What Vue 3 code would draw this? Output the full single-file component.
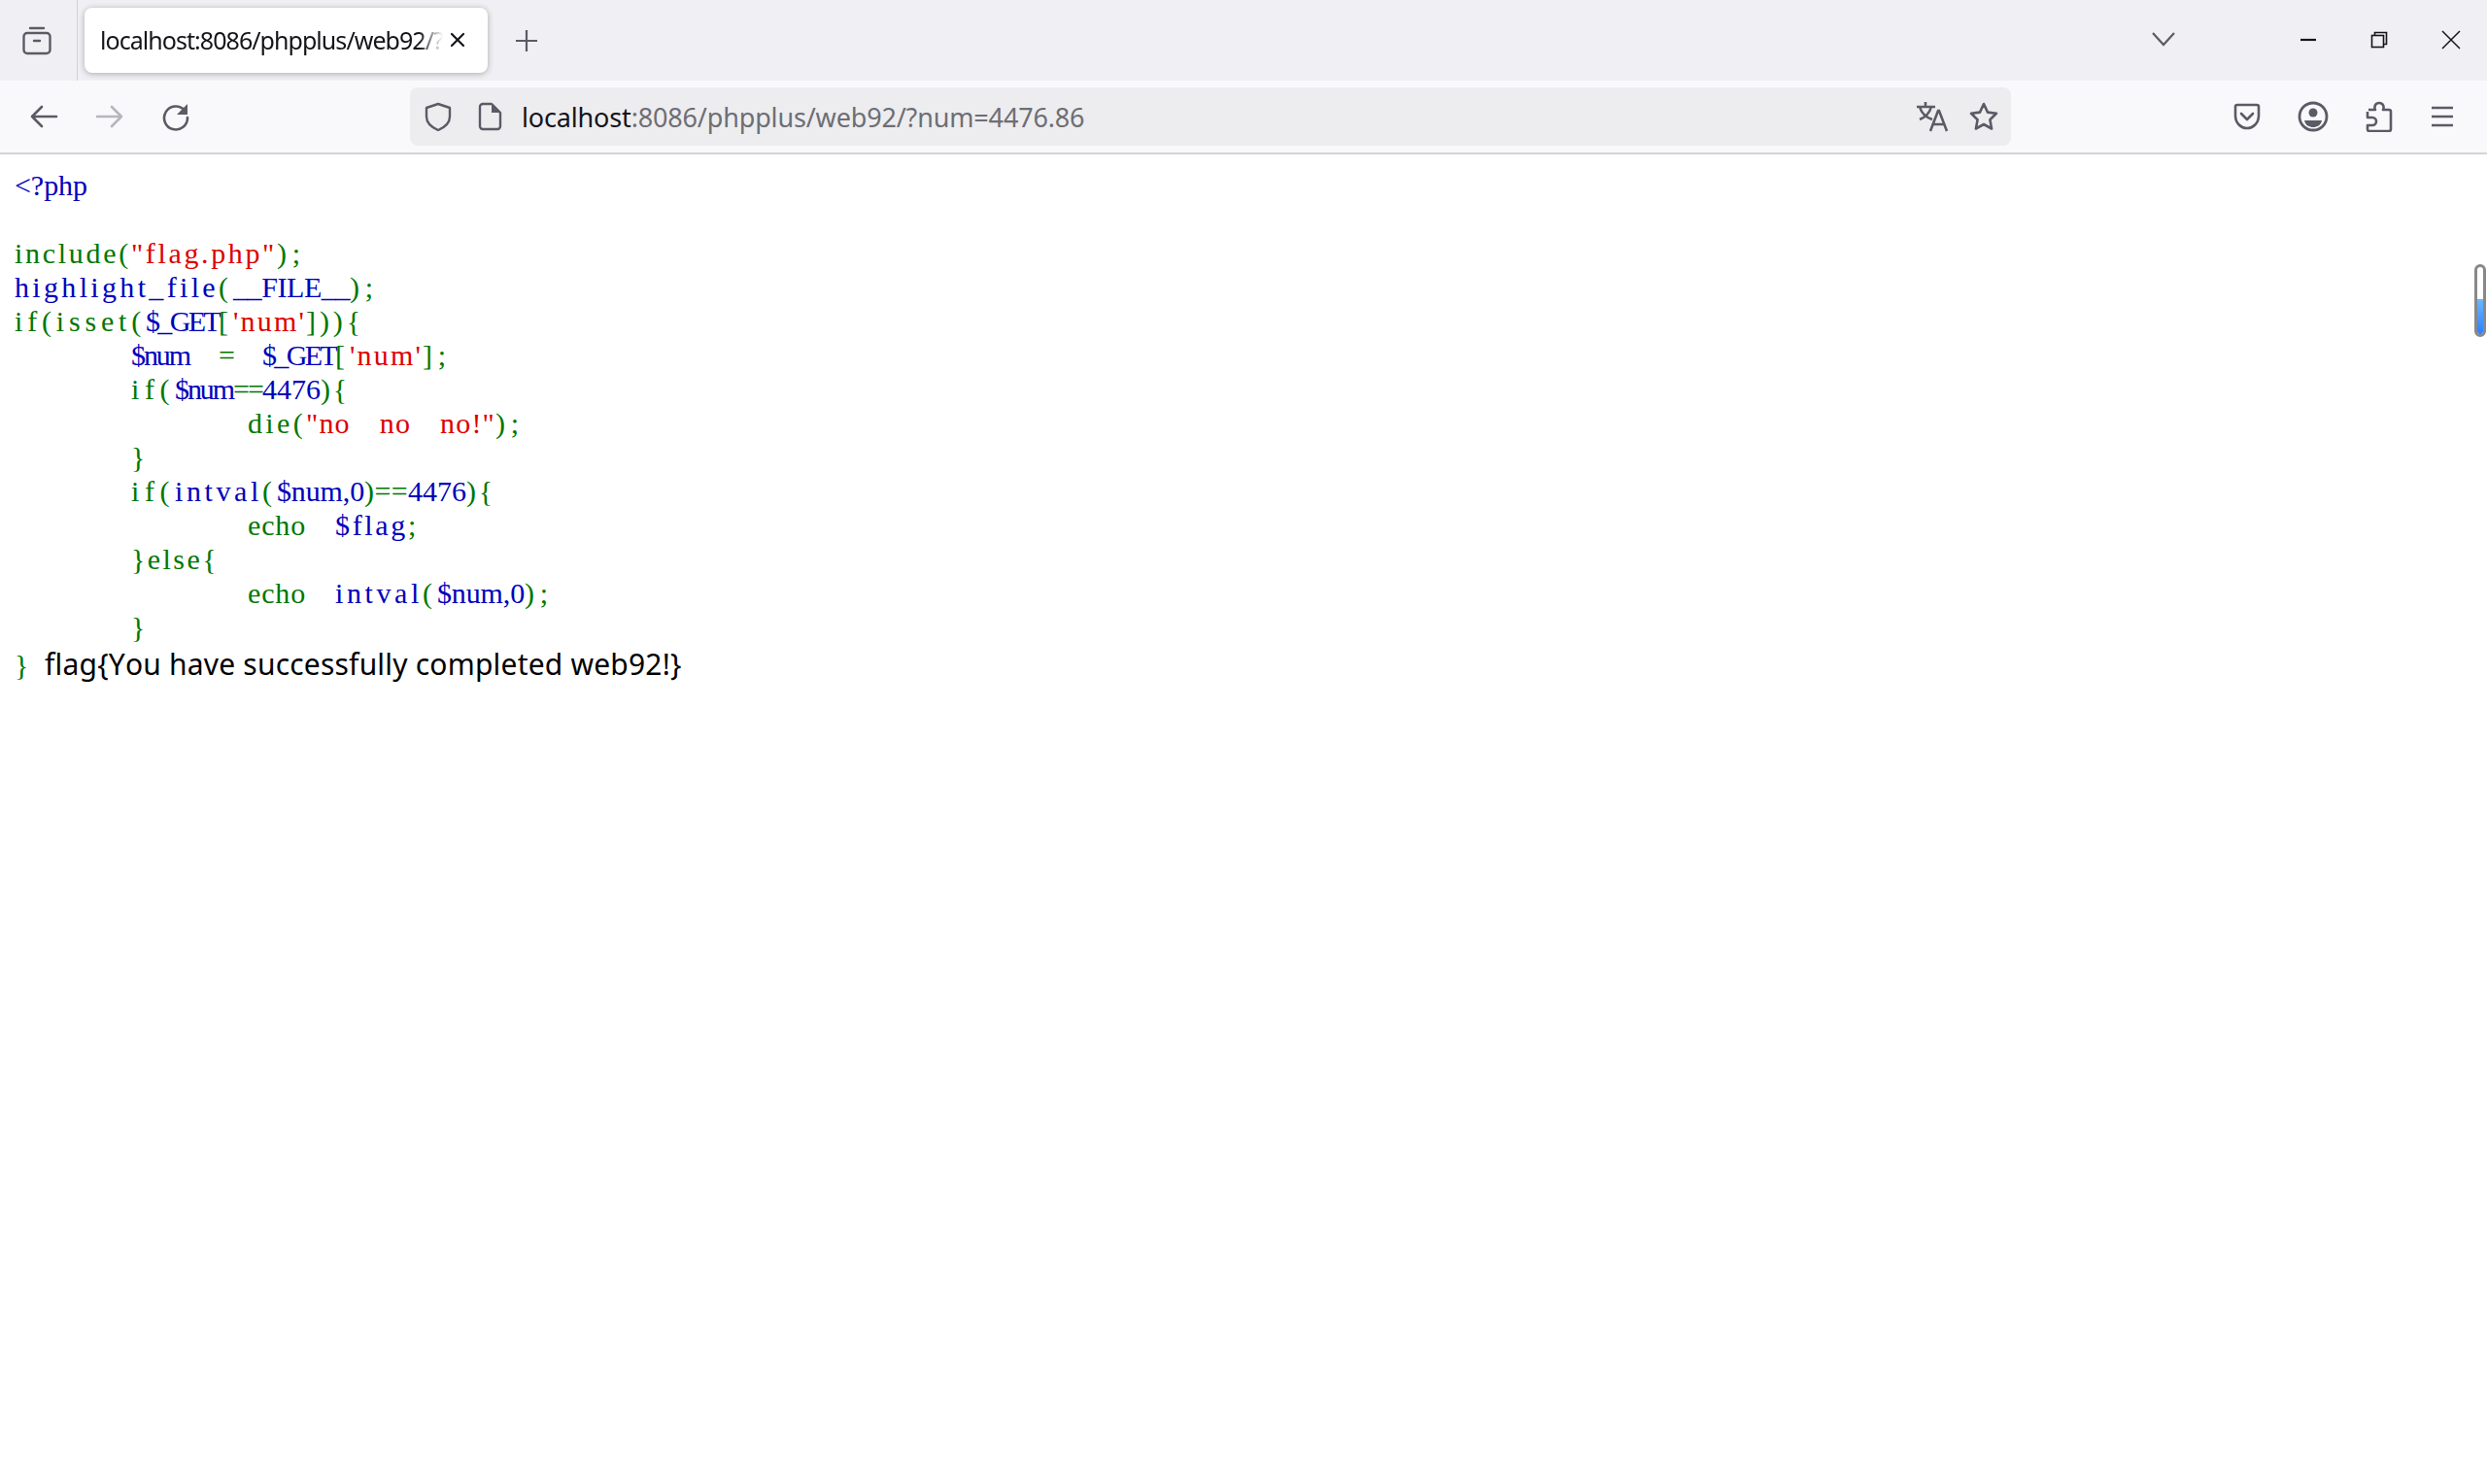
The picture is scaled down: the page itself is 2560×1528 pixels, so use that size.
<script setup>
const lines = [
  [['b', '<?php']],
  [],
  [['g', 'include('], ['r', '"flag.php"'], ['g', ');']],
  [['b', 'highlight_file'], ['g', '('], ['b', '__FILE__'], ['g', ');']],
  [['g', 'if(isset('], ['b', '$_GET'], ['g', '['], ['r', "'num'"], ['g', '])){']],
  [['b', '        $num'], ['g', '  =  '], ['b', '$_GET'], ['g', '['], ['r', "'num'"], ['g', '];']],
  [['g', '        if('], ['b', '$num'], ['g', '=='], ['b', '4476'], ['g', '){']],
  [['g', '                die('], ['r', '"no  no  no!"'], ['g', ');']],
  [['g', '        }']],
  [['g', '        if('], ['b', 'intval'], ['g', '('], ['b', '$num,0'], ['g', ')=='], ['b', '4476'], ['g', '){']],
  [['g', '                echo  '], ['b', '$flag'], ['g', ';']],
  [['g', '        }else{']],
  [['g', '                echo  '], ['b', 'intval'], ['g', '('], ['b', '$num,0'], ['g', ');']],
  [['g', '        }']],
]

// Advance widths of the serif face (per 1000 em), so that every token fills
// exactly its share of the 15px character grid of the original code listing.
const FONT_SIZE = 30
const CELL = 15
const SPACE = 250
const advance = {
  '!': 333, '"': 408, $: 500, "'": 180, '(': 333, ')': 333, ',': 250, '.': 250, ';': 278,
  '<': 564, '=': 564, '?': 444, E: 611, F: 556, G: 722, I: 333, L: 611, T: 611,
  '[': 333, ']': 333, _: 500, a: 444, b: 500, c: 444, d: 500, e: 444, f: 333, g: 500,
  h: 500, i: 278, l: 278, m: 778, n: 500, o: 500, p: 500, r: 333, s: 389, t: 278,
  u: 500, v: 500, w: 722, '{': 480, '}': 480,
}
const fit = (text) => {
  const chars = [...text].filter((c) => c !== ' ')
  const natural = chars.reduce((sum, c) => sum + (advance[c] ?? 500), 0) * FONT_SIZE / 1000
  const spacing = (CELL * chars.length - natural) / chars.length
  const wordGap = CELL - SPACE * FONT_SIZE / 1000 - spacing
  return { letterSpacing: spacing.toFixed(3) + 'px', wordSpacing: wordGap.toFixed(3) + 'px' }
}
</script>

<template>
  <div class="browser">
    <header class="tabbar">
      <div class="view-btn">
        <svg width="32" height="32" viewBox="0 0 32 32" fill="none" stroke="#5b5b66" stroke-width="2.4">
          <path d="M9 3h14" stroke-linecap="round" />
          <rect x="2.5" y="8" width="27" height="21" rx="3.5" />
          <path d="M13 16h6" stroke-linecap="round" />
        </svg>
      </div>
      <div class="tab">
        <span class="tab-title">localhost:8086/phpplus/web92/?num=4476.86</span>
        <svg class="tab-close" width="18" height="18" viewBox="0 0 18 18" stroke="#15141a" stroke-width="2.2" stroke-linecap="round">
          <path d="M3 3l12 12M15 3L3 15" />
        </svg>
      </div>
      <svg class="plus" width="24" height="24" viewBox="0 0 24 24" stroke="#5b5b66" stroke-width="2.2">
        <path d="M12 1v22M1 12h22" />
      </svg>
      <div class="spacer"></div>
      <svg class="chev" width="24" height="24" viewBox="0 0 24 24" fill="none" stroke="#5b5b66" stroke-width="2.2">
        <path d="M1 6l11 12L23 6" />
      </svg>
      <div class="winctl">
        <svg width="18" height="18" viewBox="0 0 18 18" stroke="#15141a" stroke-width="2.2"><path d="M1 9h16" /></svg>
        <svg width="18" height="18" viewBox="0 0 18 18" fill="none" stroke="#15141a" stroke-width="1.6">
          <rect x="1.5" y="4.5" width="12" height="12" />
          <path d="M4.5 4.5V1.5h12v12h-3" />
        </svg>
        <svg width="20" height="20" viewBox="0 0 20 20" stroke="#15141a" stroke-width="1.5"><path d="M1 1l18 18M19 1L1 19" /></svg>
      </div>
    </header>

    <nav class="navbar">
      <div class="nav-left">
        <svg width="30" height="30" viewBox="0 0 30 30" fill="none" stroke="#5b5b66" stroke-width="2.6" stroke-linecap="round" stroke-linejoin="round">
          <path d="M28 15H3M13 5L3 15l10 10" />
        </svg>
        <svg width="30" height="30" viewBox="0 0 30 30" fill="none" stroke="#b6b6bd" stroke-width="2.6" stroke-linecap="round" stroke-linejoin="round">
          <path d="M2 15h25M17 5l10 10-10 10" />
        </svg>
        <svg width="30" height="30" viewBox="0 0 30 30" fill="none" stroke="#5b5b66" stroke-width="2.6" stroke-linecap="round">
          <path d="M24 8.5A12 12 0 1 0 27 16" />
          <path d="M27 2v11H16z" fill="#5b5b66" stroke="none" />
        </svg>
      </div>
      <div class="urlbar">
        <svg width="30" height="30" viewBox="0 0 30 30" fill="none" stroke="#5b5b66" stroke-width="2.4" stroke-linejoin="round">
          <path d="M15 2l12 4v9c0 7-5 11-12 14C8 26 3 22 3 15V6z" />
        </svg>
        <svg class="doc" width="26" height="30" viewBox="0 0 26 30" fill="none" stroke="#5b5b66" stroke-width="2.4" stroke-linejoin="round">
          <path d="M6 2h9l9 9v14a3 3 0 0 1-3 3H6a3 3 0 0 1-3-3V5a3 3 0 0 1 3-3z" />
          <path d="M15 2l9 9h-9z" fill="#5b5b66" stroke="none" />
        </svg>
        <span class="url"><b>localhost</b>:8086/phpplus/web92/?num=4476.86</span>
        <div class="spacer"></div>
        <svg width="34" height="32" viewBox="0 0 34 32" fill="none" stroke="#5b5b66" stroke-width="2.6">
          <path d="M1 6h19M10 1v5M4 6c2 7 7 11 13 13M16 6c-2 7-7 11-12 13" />
          <path d="M15 31l8-21h1l8 21M18 24h11" />
        </svg>
        <svg width="32" height="32" viewBox="0 0 32 32" fill="none" stroke="#5b5b66" stroke-width="2.6" stroke-linejoin="round">
          <path d="M16 3l4 8.6 9 1.2-6.6 6.4 1.7 9.3L16 24l-8.1 4.5 1.7-9.3L3 12.8l9-1.2z" />
        </svg>
      </div>
      <div class="nav-right">
        <svg width="28" height="30" viewBox="0 0 28 30" fill="none" stroke="#5b5b66" stroke-width="2.6" stroke-linejoin="round" stroke-linecap="round">
          <path d="M4 3h20a2 2 0 0 1 2 2v9c0 8-6 13-12 13S2 22 2 14V5a2 2 0 0 1 2-2z" />
          <path d="M8 12l6 6 6-6" />
        </svg>
        <svg width="32" height="32" viewBox="0 0 32 32" fill="none" stroke="#5b5b66" stroke-width="2.8">
          <circle cx="16" cy="16" r="14" />
          <circle cx="16" cy="12" r="4.5" fill="#5b5b66" stroke="none" />
          <path d="M7 20h18c-1 5-5 7-9 7s-8-2-9-7z" fill="#5b5b66" stroke="none" />
        </svg>
        <svg width="28" height="32" viewBox="0 0 28 32" fill="none" stroke="#5b5b66" stroke-width="2.6" stroke-linejoin="round">
          <path d="M3 9h7c-1-2-1-7 4-7s5 5 4 7h6a2 2 0 0 1 2 2v18a2 2 0 0 1-2 2H4a2 2 0 0 1-2-2v-4h5a4 4 0 0 0 0-8H2v-6" />
        </svg>
        <svg width="26" height="24" viewBox="0 0 26 24" stroke="#5b5b66" stroke-width="2.6">
          <path d="M2 3h22M2 12h22M2 21h22" />
        </svg>
      </div>
    </nav>

    <main class="page">
      <code class="code">
        <div v-for="(line, i) in lines" :key="i" class="line"><span v-for="(t, j) in line" :key="j" :class="t[0]" :style="fit(t[1])">{{ t[1] }}</span></div>
        <div class="line last"><span class="g" :style="fit('}')">}</span><span class="flag">flag{You have successfully completed web92!}</span></div>
      </code>
      <div class="cursor"><div class="fill"></div></div>
    </main>
  </div>
</template>

<style scoped>
.browser { width: 2560px; height: 1528px; display: flex; flex-direction: column; background: #fff; overflow: hidden; font-family: "Noto Sans", "Open Sans", sans-serif; }
.spacer { flex: 1; }
svg { display: block; flex: none; }
.tabbar { height: 83px; background: #f0f0f4; display: flex; align-items: center; box-sizing: border-box; }
.view-btn { width: 80px; height: 83px; box-sizing: border-box; border-right: 1px solid #cfcfd8; display: flex; align-items: center; justify-content: center; padding-right: 4px; flex: none; }
.tab { margin-left: 7px; width: 415px; height: 67px; background: #fff; border-radius: 8px; box-shadow: 0 1px 6px rgba(0,0,0,.3); display: flex; align-items: center; padding: 0 22px 2px 16px; box-sizing: border-box; }
.tab-title { flex: 1; overflow: hidden; white-space: nowrap; font-size: 25px; color: #15141a; letter-spacing: -.95px; -webkit-mask-image: linear-gradient(to right, #000 93%, transparent 100%); mask-image: linear-gradient(to right, #000 93%, transparent 100%); }
.tab-close { margin-left: 6px; }
.plus { margin-left: 28px; }
.chev { margin-right: 128px; margin-bottom: 3px; }
.winctl { display: flex; align-items: center; gap: 55px; margin-right: 27px; margin-bottom: 2px; }
.navbar { height: 76px; box-sizing: border-box; border-bottom: 2px solid #d4d4d8; background: #f9f9fb; display: flex; align-items: center; }
.nav-left { display: flex; align-items: center; gap: 38px; width: 422px; padding-left: 30px; box-sizing: border-box; flex: none; }
.urlbar { width: 1648px; height: 60px; background: #ededf0; border-radius: 8px; display: flex; align-items: center; padding: 0 12px 0 14px; box-sizing: border-box; flex: none; }
.doc { margin-left: 25px; }
.url { margin-left: 20px; font-size: 27px; color: #6e6e74; white-space: nowrap; letter-spacing: -.16px; }
.url b { font-weight: 400; color: #15141a; }
.urlbar .spacer + svg { margin-right: 20px; }
.nav-right { display: flex; align-items: center; gap: 38px; margin-left: 229px; flex: none; }
.page { flex: 1; position: relative; background: #fff; }
.code { display: block; padding: 14px 15px 0; font-family: "Liberation Serif", serif; font-size: 30px; line-height: 35px; font-kerning: none; }
.line { height: 35px; white-space: pre; }
.g { color: #007700; }
.b { color: #0000bb; }
.r { color: #dd0000; }
.flag { margin-left: 16px; font-family: "Noto Sans", sans-serif; font-size: 30px; color: #000; letter-spacing: .2px; }
.last { margin-top: 3px; }
.cursor { position: absolute; left: 2547px; top: 113px; width: 12px; height: 75px; box-sizing: border-box; border: 3px solid #888; border-radius: 6px; background: #fff; display: flex; align-items: flex-end; }
.fill { width: 100%; height: 36px; background: linear-gradient(#6db6ff, #2a7fff); border-radius: 0 0 3px 3px; }
</style>
